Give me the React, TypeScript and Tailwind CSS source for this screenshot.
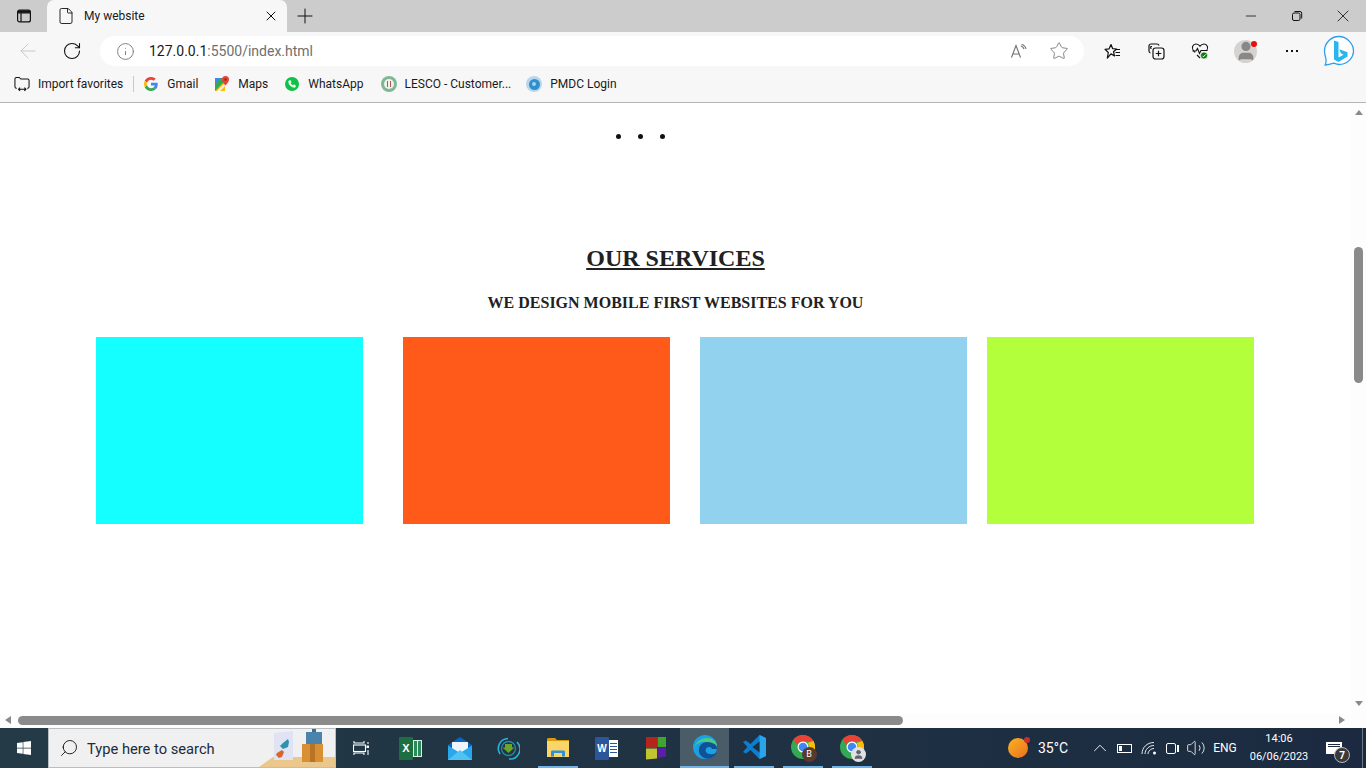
import type { ReactNode } from 'react'
import { ArrowLeft, ChevronUp, File, Info, Minus, Phone, Plus, RotateCw, Search, Star, User, Volume2, X } from 'lucide-react'
import { FaWindows } from 'react-icons/fa'

function TabsIcon() {
  return (
    <svg width="16" height="16" viewBox="0 0 16 16" fill="none" stroke="#111" strokeWidth="1.2">
      <rect x="1.6" y="2.1" width="12.8" height="11.8" rx="2" />
      <path d="M1.6 4.8h12.8M5 4.8v9" />
      <rect x="2" y="2.6" width="12" height="2" fill="#111" stroke="none" />
    </svg>
  )
}

function RestoreIcon() {
  return (
    <svg width="12" height="12" viewBox="0 0 12 12" fill="none" stroke="#111" strokeWidth="1">
      <rect x="1.5" y="3" width="7.5" height="7.5" rx="1.5" />
      <path d="M3.5 1.5h5.5a1.7 1.7 0 0 1 1.7 1.7V8.5" />
    </svg>
  )
}

function ReadAloudIcon() {
  return (
    <svg width="18" height="16" viewBox="0 0 18 16" fill="none" stroke="#707070" strokeWidth="1.1">
      <path d="M1.5 14.5 6 2.5l4.5 12M3 11h6" />
      <path d="M10 2c1.600.4 2.600 1.500 3 3M10.500 .5c2.500.5 4 2 4.500 4.500" transform="translate(1 1)" />
    </svg>
  )
}

function FavoritesIcon() {
  return (
    <svg width="17" height="17" viewBox="0 0 17 17" fill="none" stroke="#111" strokeWidth="1.2">
      <path d="M7 1.500 8.700 5.700l4 .3-3.200 2.700 1 4.300L7 10.800 3.300 15l1-5.500L1 6.300l4-.4z" strokeLinejoin="round" />
      <path d="M11 6.500h5M11.500 9.500h4.500M11.500 12.500h4.500" />
    </svg>
  )
}

function CollectionsIcon() {
  return (
    <svg width="17" height="17" viewBox="0 0 17 17" fill="none" stroke="#111" strokeWidth="1.2">
      <path d="M11 2.500C10.700 1.500 10 1 9 1H3C1.800 1 1 1.800 1 3v5c0 1 .6 1.700 1.500 2" />
      <path d="M4 3.500H3.200C2 3.500 3 5 3 6" />
      <rect x="5" y="5" width="11" height="11" rx="2.500" />
      <path d="M10.500 7.700v5.600M7.700 10.500h5.600" />
    </svg>
  )
}

function HeartPulseIcon() {
  return (
    <svg width="18" height="18" viewBox="0 0 18 18" fill="none">
      <path d="M4 10.500 2.300 8.500C.2 5.700 1.800 2 5 2c1.700 0 3 .8 4 2.300C10 2.800 11.300 2 13 2c3.200 0 4.800 3.700 2.700 6.500" stroke="#111" strokeWidth="1.100" />
      <path d="M1.500 9h3.500l1.500-2.500L8.500 11.500 10 8.500h6.500M6 13l3 3" stroke="#111" strokeWidth="1.100" />
      <circle cx="13" cy="13.500" r="3.600" fill="#107c10" stroke="#f7f7f7" strokeWidth=".8" />
      <path d="m11.500 13.800 1 1 2-2.300" stroke="#fff" strokeWidth="1" />
    </svg>
  )
}

function BingIcon() {
  return (
    <svg width="32" height="32" viewBox="0 0 32 32" fill="none">
      <defs>
        <linearGradient id="bingFill" x1="10" y1="5" x2="22" y2="26">
          <stop offset="0" stopColor="#28b6f0" />
          <stop offset="1" stopColor="#1464d8" />
        </linearGradient>
      </defs>
      <path d="M16 1.500C8 1.500 1.500 8 1.500 16c0 3.500 1 6 1.500 8 .4 2-.2 4.500-.8 6 3-.2 6-1 8.500-1.800 1.700.6 3.300 1.300 5.300 1.300 8 0 14.500-6.500 14.500-13.500S24 1.500 16 1.500z" fill="#fff" stroke="#2c9fea" strokeWidth="1.300" />
      <path d="M11 5.500 15.500 7v15.500l5-2.800-2.500-1.200-1.700-4.200 8.200 2.900v4.200L15.500 27 11 24.500z" fill="url(#bingFill)" />
    </svg>
  )
}

function ImportIcon() {
  return (
    <svg width="17" height="16" viewBox="0 0 17 16" fill="none" stroke="#111" strokeWidth="1.100">
      <path d="M3 12.500H2.500c-1 0-1.500-.6-1.500-1.500V2.500C1 1.700 1.600 1 2.500 1h3l1.800 1.800h7.200c.9 0 1.500.7 1.500 1.500V11c0 .9-.6 1.500-1.500 1.500H14" />
      <path d="M5 13.500h7.500M6.500 11.800 4.800 13.500l1.700 1.700M11 11.800l1.700 1.700-1.700 1.700" />
    </svg>
  )
}

function GoogleIcon() {
  return (
    <svg width="14" height="14" viewBox="0 0 48 48">
      <path fill="#EA4335" d="M24 9.500c3.500 0 6.700 1.200 9.200 3.600l6.900-6.900C35.900 2.400 30.500 0 24 0 14.600 0 6.500 5.400 2.600 13.200l8 6.200C12.400 13.700 17.700 9.500 24 9.500z" />
      <path fill="#4285F4" d="M46.900 24.500c0-1.600-.1-3.100-.4-4.500H24v9h12.900c-.6 3-2.200 5.500-4.700 7.200l7.700 6c4.500-4.200 7-10.300 7-17.700z" />
      <path fill="#FBBC05" d="M10.500 28.600c-.5-1.400-.8-3-.8-4.600s.3-3.200.8-4.600l-8-6.200C.9 16.500 0 20.100 0 24s.9 7.500 2.600 10.800z" />
      <path fill="#34A853" d="M24 48c6.500 0 11.900-2.100 15.900-5.800l-7.700-6c-2.200 1.400-4.900 2.300-8.200 2.300-6.300 0-11.600-4.200-13.500-9.900l-8 6.200C6.500 42.600 14.600 48 24 48z" />
    </svg>
  )
}

function MapsIcon() {
  return (
    <svg width="16" height="16" viewBox="0 0 16 16">
      <path d="M1 2h10v13H1z" fill="#34a853" />
      <path d="M1 15 11 5v10z" fill="#fbbc05" />
      <path d="M1 2h6L1 8z" fill="#4285f4" />
      <path d="M3 15 11 7v3l-5 5z" fill="#f1f3f4" />
      <path d="M11.500 0a3.500 3.500 0 0 0-3.500 3.500C8 6 11.500 9.500 11.500 9.500S15 6 15 3.500A3.500 3.500 0 0 0 11.500 0z" fill="#ea4335" />
      <circle cx="11.500" cy="3.500" r="1.200" fill="#a52714" />
    </svg>
  )
}

function WhatsAppIcon() {
  return (
    <span className="flex h-[14px] w-[14px] items-center justify-center rounded-full bg-[#0fc145]">
      <Phone size={8} fill="#fff" stroke="#fff" />
    </span>
  )
}

function LescoIcon() {
  return (
    <span className="flex h-[16px] w-[16px] items-center justify-center rounded-full bg-[#7fb894]">
      <span className="flex h-[10px] w-[10px] items-center justify-center rounded-full bg-[#f1f1ee]">
        <span className="h-[6px] w-[4px] border-x border-[#b4574f]" />
      </span>
    </span>
  )
}

function PmdcIcon() {
  return (
    <span className="flex h-[16px] w-[16px] items-center justify-center rounded-full bg-[#b9d6ea]">
      <span className="flex h-[11px] w-[11px] items-center justify-center rounded-full bg-[#2f8fd0]">
        <span className="h-[4px] w-[4px] rounded-full bg-[#a5d3ee]" />
      </span>
    </span>
  )
}

function Bookmark({ icon, label, className }: { icon: ReactNode; label: string; className: string }) {
  return (
    <div className={`flex items-center ${className}`}>
      <span className="flex w-[16px] items-center justify-center">{icon}</span>
      <span className="ml-[8px] whitespace-nowrap text-[12px] text-[#1a1a1a]">{label}</span>
    </div>
  )
}

function TitleBar() {
  return (
    <div className="flex h-[32px] shrink-0 items-center bg-[#cccccc]">
      <div className="flex w-[47px] justify-center">
        <TabsIcon />
      </div>
      <div className="flex h-[32px] w-[240px] items-center rounded-t-[7px] bg-[#f7f7f7] pl-[10px] pr-[8px]">
        <File size={18} color="#111" strokeWidth={1.2} />
        <span className="ml-[9px] flex-1 text-[12px] text-[#1a1a1a]">My website</span>
        <X size={16} color="#111" strokeWidth={1.5} />
      </div>
      <div className="ml-[6px] flex w-[24px] justify-center">
        <Plus size={24} color="#111" strokeWidth={1} />
      </div>
      <div className="ml-auto flex items-center">
        <div className="flex w-[46px] justify-center">
          <Minus size={16} color="#111" strokeWidth={1.2} />
        </div>
        <div className="flex w-[46px] justify-center">
          <RestoreIcon />
        </div>
        <div className="flex w-[46px] justify-center pr-[1px]">
          <X size={20} color="#111" strokeWidth={1} />
        </div>
      </div>
    </div>
  )
}

function Toolbar() {
  return (
    <div className="flex h-[38px] shrink-0 items-center bg-[#f7f7f7]">
      <div className="flex w-[56px] justify-center">
        <ArrowLeft size={24} color="#c9c9c9" strokeWidth={1} />
      </div>
      <div className="flex w-[32px] justify-center">
        <RotateCw size={20} color="#111" strokeWidth={1.3} />
      </div>
      <div className="ml-[12px] flex h-[30px] w-[984px] items-center rounded-full bg-white pl-[16px]">
        <Info size={19} color="#707070" strokeWidth={1.1} />
        <span className="ml-[14px] flex-1 text-[14px]">
          <span className="text-[#1a1a1a]">127.0.0.1</span>
          <span className="text-[#6f6f6f]">:5500/index.html</span>
        </span>
        <div className="flex w-[40px] justify-center">
          <ReadAloudIcon />
        </div>
        <div className="mr-[5px] flex w-[40px] justify-center">
          <Star size={20} color="#707070" strokeWidth={1} />
        </div>
      </div>
      <div className="ml-[14px] flex w-[28px] justify-center">
        <FavoritesIcon />
      </div>
      <div className="ml-[16px] flex w-[28px] justify-center">
        <CollectionsIcon />
      </div>
      <div className="ml-[16px] flex w-[28px] justify-center">
        <HeartPulseIcon />
      </div>
      <div className="relative ml-[20px] flex h-[23px] w-[23px] items-center justify-center overflow-hidden rounded-full bg-[#d4d3d1]">
        <User size={22} color="#8a8886" fill="#8a8886" />
      </div>
      <span className="relative -ml-[6px] -mt-[15px] h-[6px] w-[6px] rounded-full bg-[#e50f0f]" />
      <div className="ml-[23px] flex w-[24px] justify-center gap-[3px]">
        <span className="h-[2px] w-[2px] bg-[#111]" />
        <span className="h-[2px] w-[2px] bg-[#111]" />
        <span className="h-[2px] w-[2px] bg-[#111]" />
      </div>
      <div className="ml-[19px]">
        <BingIcon />
      </div>
    </div>
  )
}

function BookmarksBar() {
  return (
    <div className="flex h-[33px] shrink-0 items-center border-b border-[#b5b5b5] bg-[#f7f7f7] pb-[4px] pl-[14px]">
      <Bookmark icon={<ImportIcon />} label="Import favorites" className="" />
      <span className="ml-[10px] h-[16px] w-px bg-[#c8c8c8]" />
      <Bookmark icon={<GoogleIcon />} label="Gmail" className="ml-[9px]" />
      <Bookmark icon={<MapsIcon />} label="Maps" className="ml-[16px]" />
      <Bookmark icon={<WhatsAppIcon />} label="WhatsApp" className="ml-[16px]" />
      <Bookmark icon={<LescoIcon />} label="LESCO - Customer..." className="ml-[17px]" />
      <Bookmark icon={<PmdcIcon />} label="PMDC Login" className="ml-[15px]" />
    </div>
  )
}

function Services() {
  return (
    <div className="flex-1 bg-white font-['Liberation_Serif',serif] text-[#212121]">
      <div className="flex h-[67px] items-center gap-[17px] pl-[616px]">
        <span className="h-[5px] w-[5px] rounded-full bg-[#111]" />
        <span className="h-[5px] w-[5px] rounded-full bg-[#111]" />
        <span className="h-[5px] w-[5px] rounded-full bg-[#111]" />
      </div>
      <h2 className="mt-[73px] text-center text-[24px] font-bold leading-[30px] underline">OUR SERVICES</h2>
      <h3 className="mt-[20px] text-center text-[16px] font-bold leading-[20px]">WE DESIGN MOBILE FIRST WEBSITES FOR YOU</h3>
      <div className="mt-[24px] flex pl-[96px]">
        <div className="h-[187px] w-[267px] bg-[#14ffff]" />
        <div className="ml-[40px] h-[187px] w-[267px] bg-[#ff5a1a]" />
        <div className="ml-[30px] h-[187px] w-[267px] bg-[#93d2ef]" />
        <div className="ml-[20px] h-[187px] w-[267px] bg-[#b4ff3c]" />
      </div>
    </div>
  )
}

function VerticalScrollbar() {
  return (
    <div className="flex w-[15px] shrink-0 flex-col items-center bg-[#fdfdfd] pt-[7px]">
      <span className="h-0 w-0 border-x-[4px] border-b-[5px] border-x-transparent border-b-[#8a8a8a]" />
      <div className="mt-[132px] h-[136px] w-[9px] rounded-full bg-[#8a8a8a]" />
      <span className="mt-[318px] h-0 w-0 border-x-[4px] border-t-[5px] border-x-transparent border-t-[#8a8a8a]" />
    </div>
  )
}

function HorizontalScrollbar() {
  return (
    <div className="flex h-[14px] shrink-0 items-center bg-[#fdfdfd] pb-[2px] pl-[5px]">
      <span className="h-0 w-0 border-y-[4px] border-r-[6px] border-y-transparent border-r-[#8a8a8a]" />
      <div className="ml-[7px] h-[9px] w-[885px] rounded-full bg-[#8a8a8a]" />
      <span className="ml-[436px] h-0 w-0 border-y-[4px] border-l-[6px] border-y-transparent border-l-[#8a8a8a]" />
    </div>
  )
}

// little card and gift picture that sits at the end of the search box
function SearchPicture() {
  return (
    <svg width="76" height="38" viewBox="0 0 76 38">
      <path d="M0 38 14 28h62v10z" fill="#ecc78b" />
      <path d="M15 4 34 2v29H15z" fill="#dfe3f3" />
      <path d="M24 14l5-4 1 3-1 5-5 2-3-3z" fill="#2b93ad" />
      <path d="M18 24l5-3 2 2-2 5-3 1-3-3z" fill="#d9662a" />
      <path d="M47 3h16v12H47z" fill="#4a84ad" />
      <path d="M53 0h4v3h-4z" fill="#3b6f94" />
      <path d="M43 15h21v18H43z" fill="#d98f33" />
      <path d="M51 15h5v18h-5z" fill="#b87424" />
    </svg>
  )
}

function TaskViewIcon() {
  return (
    <svg width="17" height="16" viewBox="0 0 17 16" fill="none" stroke="#fff" strokeWidth="1.100">
      <path d="M1 1v2h10V1M1 15v-2h10v2" />
      <rect x="1" y="5" width="12" height="6.500" transform="translate(-.5 0)" />
      <path d="M15 2v2" />
      <rect x="13.500" y="5.500" width="2.500" height="2.500" fill="#fff" stroke="none" />
      <path d="M15 10v5" />
    </svg>
  )
}

function ExcelIcon() {
  return (
    <span className="flex h-[23px] w-[23px] items-center">
      <span className="z-10 flex h-[23px] w-[14px] items-center justify-center rounded-[1px] bg-[#1d6f42] font-['Liberation_Sans',sans-serif] text-[11px] font-bold text-white">X</span>
      <span className="grid h-[17px] w-[9px] grid-cols-2 gap-px bg-[#dcefe3] p-px">
        <span className="bg-[#2a8a58]" />
        <span className="bg-[#2a8a58]" />
      </span>
    </span>
  )
}

function MailIcon() {
  return (
    <svg width="24" height="23" viewBox="0 0 24 23">
      <path d="M12 0 24 8v15H0V8z" fill="#0b64c0" />
      <path d="M4 5h16v10H4z" fill="#eef4fb" />
      <path d="M0 8.500 12 16 24 8.500V23H0z" fill="#28a8ea" />
      <path d="M0 23 12 13l12 10z" fill="#50c3f4" />
    </svg>
  )
}

function SyncIcon() {
  return (
    <svg width="23" height="23" viewBox="0 0 23 23" fill="none">
      <path d="M3 17a10 10 0 0 1 8-15.500M20 5a10 10 0 0 1-8 17" stroke="#2bb3d6" strokeWidth="1.600" />
      <circle cx="11.500" cy="11.500" r="7" stroke="#1b8fb0" strokeWidth="1.300" />
      <path d="M8 7h7v3.500h2.500L11.500 16l-6-5.500H8z" fill="#6aa52a" />
    </svg>
  )
}

function FolderIcon() {
  return (
    <svg width="22" height="19" viewBox="0 0 22 19">
      <path d="M0 1.500C0 .7.700 0 1.500 0H8l2 2h12v3H0z" fill="#d69b0f" />
      <path d="M0 3h22v16H0z" fill="#fbd568" />
      <path d="M4 18.500V14c0-1 .7-1.500 1.500-1.500h11c.8 0 1.500.5 1.500 1.500v4.500h-3V15H7v3.500z" fill="#2f8fd8" />
    </svg>
  )
}

function WordIcon() {
  return (
    <span className="flex h-[23px] w-[23px] items-center">
      <span className="z-10 flex h-[23px] w-[14px] items-center justify-center rounded-[1px] bg-[#2b579a] font-['Liberation_Sans',sans-serif] text-[10px] font-bold text-white">W</span>
      <span className="flex h-[17px] w-[9px] flex-col justify-center gap-[2px] bg-white px-px">
        <span className="h-px bg-[#2b579a]" />
        <span className="h-px bg-[#2b579a]" />
        <span className="h-px bg-[#2b579a]" />
        <span className="h-px bg-[#2b579a]" />
      </span>
    </span>
  )
}

function SquaresIcon() {
  return (
    <svg width="22" height="24" viewBox="0 0 22 24">
      <path d="M1 1h11v11H1z" fill="#b5251d" />
      <path d="M12.500 1H21v10h-8.500z" fill="#3fa52f" />
      <path d="M1 12.500h11v10L1 23.500z" fill="#c0c42f" />
      <path d="M12.500 11.500H21v9l-8.500 1.500z" fill="#5a1fa8" />
    </svg>
  )
}

function EdgeIcon() {
  return (
    <svg width="24" height="24" viewBox="0 0 24 24">
      <defs>
        <linearGradient id="edgeA" x1="2" y1="22" x2="22" y2="2">
          <stop offset="0" stopColor="#0c59a4" />
          <stop offset="1" stopColor="#114a8b" />
        </linearGradient>
        <linearGradient id="edgeB" x1="2" y1="4" x2="22" y2="20">
          <stop offset="0" stopColor="#1ba1e2" />
          <stop offset="1" stopColor="#33c481" />
        </linearGradient>
      </defs>
      <circle cx="12" cy="12" r="12" fill="url(#edgeB)" />
      <path d="M24 14c0-6-6-8-11-7-5 1-8 5-7 10s7 8 12 6c3-1 5-3 6-6-3 3-9 3-11 0-1-2 0-5 3-5 2 0 3 1 3 2h5z" fill="url(#edgeA)" />
      <path d="M24 11c0-5-5-8-10-8-5 0-10 3-13 9 3-4 7-6 12-5 5 0 9 2 11 4z" fill="#59d66b" opacity=".8" />
    </svg>
  )
}

function VscodeIcon() {
  return (
    <svg width="24" height="24" viewBox="0 0 24 24">
      <path d="M17.500 0 24 3v18l-6.500 3-9-9-4.500 3.500L1 17l4.500-5L1 7l3-1.500L8.500 9z" fill="#0a7fd0" />
      <path d="M17.500 0 24 3v18l-6.500 3z" fill="#2ba3ea" />
      <path d="M17.500 6.500v11L10.500 12z" fill="#1e2f3e" />
    </svg>
  )
}

function ChromeIcon({ badge }: { badge: ReactNode }) {
  return (
    <span className="relative h-[24px] w-[24px]">
      <svg width="24" height="24" viewBox="0 0 24 24">
        <circle cx="12" cy="12" r="12" fill="#34a853" />
        <path d="M12 0a12 12 0 0 1 10.400 6H12a6 6 0 0 0-5.700 4L2.500 4.500A12 12 0 0 1 12 0z" fill="#ea4335" />
        <path d="M22.400 6A12 12 0 0 1 12 24l5-8.500A6 6 0 0 0 16.500 8z" fill="#fbbc05" />
        <circle cx="12" cy="12" r="5.500" fill="#fff" />
        <circle cx="12" cy="12" r="4.300" fill="#4285f4" />
      </svg>
      {badge}
    </span>
  )
}

function TaskButton({ children, width, running, active }: { children: ReactNode; width: string; running?: boolean; active?: boolean }) {
  return (
    <div className={`flex h-[40px] shrink-0 flex-col items-center ${width} ${active ? 'bg-[#4a5c68]' : ''}`}>
      <div className="flex flex-1 items-center justify-center">{children}</div>
      {running && <span className={`h-[2px] ${active ? 'w-full' : 'w-[40px]'} bg-[#6fb3e8]`} />}
    </div>
  )
}

function WifiIcon() {
  return (
    <svg width="16" height="14" viewBox="0 0 16 14" fill="none" stroke="#fff" strokeWidth=".9">
      <path d="M1 13C1 6.500 6 1.500 13 1.500M4 13c0-4.500 4-8.500 9-8.500M7 13c0-3 3-5.500 6-5.500" />
      <circle cx="13.500" cy="12" r="1.500" fill="#fff" stroke="none" />
    </svg>
  )
}

function Taskbar() {
  return (
    <div className="flex h-[40px] shrink-0 items-center bg-gradient-to-r from-[#243b47] to-[#1b2a40] text-white">
      <div className="flex w-[48px] shrink-0 justify-center">
        <FaWindows size={16} color="#fff" />
      </div>
      <div className="flex h-[40px] w-[288px] shrink-0 items-center overflow-hidden border border-[#b9bec2] bg-[#f0f0f0] pl-[10px]">
        <Search size={20} color="#111" strokeWidth={1.1} className="-scale-x-100" />
        <span className="ml-[8px] mt-[3px] text-[14.7px] text-[#1c2b3a]">Type here to search</span>
        <div className="ml-auto flex h-[38px] items-end">
          <SearchPicture />
        </div>
      </div>
      <TaskButton width="w-[50px]"><TaskViewIcon /></TaskButton>
      <TaskButton width="w-[49px]"><ExcelIcon /></TaskButton>
      <TaskButton width="w-[49px]"><MailIcon /></TaskButton>
      <TaskButton width="w-[49px]"><SyncIcon /></TaskButton>
      <TaskButton width="w-[49px]" running><FolderIcon /></TaskButton>
      <TaskButton width="w-[49px]"><WordIcon /></TaskButton>
      <TaskButton width="w-[49px]"><SquaresIcon /></TaskButton>
      <TaskButton width="w-[49px]" running active><EdgeIcon /></TaskButton>
      <TaskButton width="w-[49px]" running><VscodeIcon /></TaskButton>
      <TaskButton width="w-[49px]" running>
        <ChromeIcon
          badge={
            <span className="absolute -bottom-[3px] -right-[2px] flex h-[15px] w-[15px] items-center justify-center rounded-full bg-[#5b3a2e] text-[9px] text-white">B</span>
          }
        />
      </TaskButton>
      <TaskButton width="w-[49px]" running>
        <ChromeIcon
          badge={
            <span className="absolute -bottom-[3px] -right-[2px] flex h-[15px] w-[15px] items-center justify-center rounded-full bg-[#dfe1e5]">
              <User size={11} color="#5f6368" fill="#5f6368" />
            </span>
          }
        />
      </TaskButton>
      <div className="ml-[128px] flex w-[28px] justify-center">
        <span className="h-[20px] w-[20px] rounded-full bg-gradient-to-br from-[#fbb321] to-[#ea6f1f]" />
      </div>
      <span className="relative -ml-[8px] -mt-[16px] h-[6px] w-[6px] rounded-full bg-[#c9302c]" />
      <span className="ml-[8px] w-[42px] text-[14px]">35°C</span>
      <div className="ml-[7px] flex w-[25px] justify-center">
        <ChevronUp size={22} color="#fff" strokeWidth={1} />
      </div>
      <div className="flex w-[24px] justify-center">
        <span className="flex h-[9px] w-[15px] border border-white p-px">
          <span className="w-[3px] bg-white" />
        </span>
      </div>
      <div className="flex w-[25px] justify-center">
        <WifiIcon />
      </div>
      <div className="flex w-[23px] justify-center">
        <span className="h-[11px] w-[10px] rounded-[2px] border border-white" />
        <span className="ml-px mt-[2px] h-[7px] w-[2px] bg-white" />
      </div>
      <div className="flex w-[24px] justify-center">
        <Volume2 size={20} color="#fff" strokeWidth={1} />
      </div>
      <span className="w-[34px] text-center text-[12px]">ENG</span>
      <div className="flex w-[74px] flex-col items-center text-[11px] leading-[18px]">
        <span>14:06</span>
        <span>06/06/2023</span>
      </div>
      <div className="relative flex w-[36px] justify-center">
        <span className="flex h-[12px] w-[16px] flex-col gap-px bg-white px-[2px] pt-[2px]">
          <span className="h-px bg-[#1b2a40]" />
          <span className="h-px bg-[#1b2a40]" />
        </span>
        <span className="absolute -bottom-[9px] left-[18px] flex h-[16px] w-[16px] items-center justify-center rounded-full border border-[#b8b8b8] bg-[#3a3a3a] text-[10px] font-bold">7</span>
      </div>
      <span className="ml-[10px] h-[40px] w-px bg-[#6a7784]" />
    </div>
  )
}

export default function App() {
  return (
    <div className="flex h-[768px] w-[1366px] flex-col overflow-hidden bg-white font-['Roboto',sans-serif]">
      <TitleBar />
      <Toolbar />
      <BookmarksBar />
      <div className="flex min-h-0 flex-1">
        <div className="flex min-w-0 flex-1 flex-col">
          <Services />
          <HorizontalScrollbar />
        </div>
        <VerticalScrollbar />
      </div>
      <Taskbar />
    </div>
  )
}
